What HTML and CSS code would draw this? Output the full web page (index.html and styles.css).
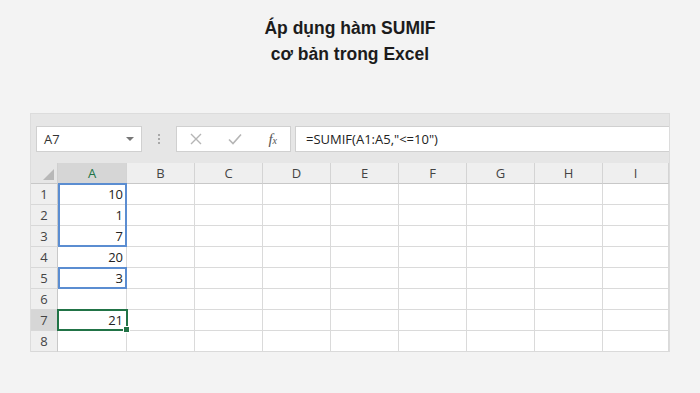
FILE: index.html
```html
<!DOCTYPE html>
<html lang="vi">
<head>
    <meta charset="UTF-8">
    <meta name="viewport" content="width=device-width, initial-scale=1.0">
    <title>Áp dụng hàm SUMIF</title>
    <link rel="stylesheet" href="styles.css">
</head>
<body>

    <div class="title">
        <h1>Áp dụng hàm SUMIF<br>cơ bản trong Excel</h1>
    </div>

    <div class="excel">
        <div class="formula-bar">
            <div class="name-box">
                <span>A7</span>
                <span class="caret"></span>
            </div>
            <div class="grip">
                <span></span><span></span><span></span>
            </div>
            <div class="fx-box">
                <svg width="12" height="12" viewBox="0 0 12 12"><path d="M1 1 L11 11 M11 1 L1 11" stroke="#b5b5b5" stroke-width="1.4" fill="none"/></svg>
                <svg width="14" height="12" viewBox="0 0 14 12"><path d="M1 6.5 L5 10.5 L13 1.5" stroke="#b5b5b5" stroke-width="1.6" fill="none"/></svg>
                <span class="fx">f<small>x</small></span>
            </div>
            <div class="formula">=SUMIF(A1:A5,"&lt;=10")</div>
        </div>

        <div class="sheet">
            <div class="corner"><span></span></div>
            <div class="col-head active">A</div>
            <div class="col-head">B</div>
            <div class="col-head">C</div>
            <div class="col-head">D</div>
            <div class="col-head">E</div>
            <div class="col-head">F</div>
            <div class="col-head">G</div>
            <div class="col-head">H</div>
            <div class="col-head">I</div>

            <div class="row-head">1</div><div class="cell">10</div><div class="cell"></div><div class="cell"></div><div class="cell"></div><div class="cell"></div><div class="cell"></div><div class="cell"></div><div class="cell"></div><div class="cell"></div>
            <div class="row-head">2</div><div class="cell">1</div><div class="cell"></div><div class="cell"></div><div class="cell"></div><div class="cell"></div><div class="cell"></div><div class="cell"></div><div class="cell"></div><div class="cell"></div>
            <div class="row-head">3</div><div class="cell">7</div><div class="cell"></div><div class="cell"></div><div class="cell"></div><div class="cell"></div><div class="cell"></div><div class="cell"></div><div class="cell"></div><div class="cell"></div>
            <div class="row-head">4</div><div class="cell">20</div><div class="cell"></div><div class="cell"></div><div class="cell"></div><div class="cell"></div><div class="cell"></div><div class="cell"></div><div class="cell"></div><div class="cell"></div>
            <div class="row-head">5</div><div class="cell">3</div><div class="cell"></div><div class="cell"></div><div class="cell"></div><div class="cell"></div><div class="cell"></div><div class="cell"></div><div class="cell"></div><div class="cell"></div>
            <div class="row-head">6</div><div class="cell"></div><div class="cell"></div><div class="cell"></div><div class="cell"></div><div class="cell"></div><div class="cell"></div><div class="cell"></div><div class="cell"></div><div class="cell"></div>
            <div class="row-head active">7</div><div class="cell">21</div><div class="cell"></div><div class="cell"></div><div class="cell"></div><div class="cell"></div><div class="cell"></div><div class="cell"></div><div class="cell"></div><div class="cell"></div>
            <div class="row-head">8</div><div class="cell"></div><div class="cell"></div><div class="cell"></div><div class="cell"></div><div class="cell"></div><div class="cell"></div><div class="cell"></div><div class="cell"></div><div class="cell"></div>

            <div class="range range-1"></div>
            <div class="range range-2"></div>
            <div class="active-cell"><span class="handle"></span></div>
        </div>
    </div>

</body>
</html>
```
FILE: styles.css
```css
body {
    margin: 0;
    background-color: #f3f3f3;
    font-family: "Open Sans", "Noto Sans", sans-serif;
    display: flex;
    flex-direction: column;
    align-items: center;
}

.title {
    padding-top: 15px;
    height: 113px;
    box-sizing: border-box;
    text-align: center;
}

.title h1 {
    margin: 0;
    font-family: "Liberation Sans", Arial, sans-serif;
    font-size: 17.5px;
    font-weight: bold;
    line-height: 26px;
    color: #1c1c1c;
}

.excel {
    width: 638px;
    background-color: #e6e6e6;
    border: 1px solid #dcdcdc;
    border-bottom: none;
}

.formula-bar {
    display: flex;
    align-items: center;
    height: 26px;
    padding: 12px 0 11px 5px;
}

.name-box {
    width: 106px;
    height: 26px;
    box-sizing: border-box;
    background-color: white;
    border: 1px solid #d0d0d0;
    display: flex;
    align-items: center;
    justify-content: space-between;
    padding: 0 7px 0 7px;
    font-size: 13px;
    color: #333;
}

.caret {
    width: 0;
    height: 0;
    border-left: 4px solid transparent;
    border-right: 4px solid transparent;
    border-top: 4px solid #777;
}

.grip {
    width: 34px;
    display: flex;
    flex-direction: column;
    align-items: center;
    gap: 2px;
}

.grip span {
    width: 2px;
    height: 2px;
    background-color: #a8a8a8;
}

.fx-box {
    width: 115px;
    height: 26px;
    box-sizing: border-box;
    background-color: white;
    border: 1px solid #d0d0d0;
    display: flex;
    align-items: center;
    justify-content: space-between;
    padding: 0 13px 0 13px;
}

.fx {
    font-family: "Liberation Serif", serif;
    font-style: italic;
    font-size: 15px;
    color: #555;
}

.fx small {
    font-size: 10px;
}

.formula {
    flex: 1;
    height: 26px;
    box-sizing: border-box;
    margin-left: 4px;
    background-color: white;
    border: 1px solid #d0d0d0;
    border-right: none;
    padding: 3px 10px;
    font-size: 13px;
    color: #222;
}

.sheet {
    position: relative;
    display: grid;
    grid-template-columns: 27px 69px repeat(7, 68px) 66px;
    grid-template-rows: repeat(9, 21px);
    background-color: white;
    font-size: 13px;
}

.corner {
    background-color: #e6e6e6;
    border-right: 1px solid #d0d0d0;
    border-bottom: 1px solid #c8c8c8;
    position: relative;
}

.corner span {
    position: absolute;
    right: 3px;
    bottom: 3px;
    width: 0;
    height: 0;
    border-left: 11px solid transparent;
    border-bottom: 11px solid #b8b8b8;
}

.col-head {
    background-color: #efefef;
    border-right: 1px solid #d4d4d4;
    border-bottom: 1px solid #c8c8c8;
    display: flex;
    align-items: center;
    justify-content: center;
    color: #444;
}

.col-head.active {
    background-color: #d6d6d6;
    color: #217346;
}

.row-head {
    background-color: #efefef;
    border-right: 1px solid #c8c8c8;
    border-bottom: 1px solid #d8d8d8;
    display: flex;
    align-items: center;
    justify-content: center;
    color: #444;
}

.row-head.active {
    background-color: #d6d6d6;
}

.cell {
    border-right: 1px solid #dadada;
    border-bottom: 1px solid #dadada;
    display: flex;
    align-items: center;
    justify-content: flex-end;
    padding-right: 3px;
    color: #222;
}

.range,
.active-cell {
    position: absolute;
    top: -1px;
    left: 0;
    right: 0;
    bottom: 0;
    grid-column: 2 / 3;
}

.range {
    border: 2px solid #5b8dd1;
}

.range-1 {
    grid-row: 2 / 5;
}

.range-2 {
    grid-row: 6 / 7;
}

.active-cell {
    grid-row: 8 / 9;
    border: 2px solid #217346;
    left: -1px;
    right: -1px;
}

.handle {
    position: absolute;
    right: -4px;
    bottom: -4px;
    width: 5px;
    height: 5px;
    background-color: #217346;
    border: 1px solid white;
}
```
